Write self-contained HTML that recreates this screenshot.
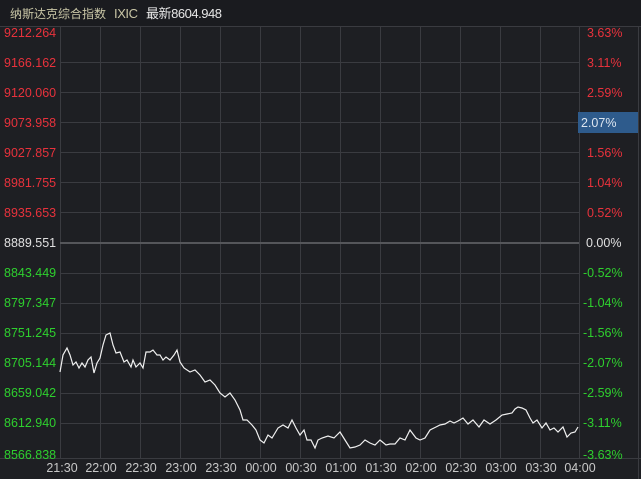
<!DOCTYPE html>
<html><head><meta charset="utf-8"><style>
body{margin:0;width:641px;height:479px;background:#1e1f23;overflow:hidden;font-family:"Liberation Sans","Noto Sans CJK SC",sans-serif;}
</style></head><body>
<svg width="641" height="479" xmlns="http://www.w3.org/2000/svg" style="position:absolute;left:0;top:0">
<rect width="641" height="479" fill="#1e1f23"/>
<rect width="641" height="26" fill="#1a1b1f"/>
<line x1="0" y1="26.5" x2="641" y2="26.5" stroke="#3a3b40"/>
<g font-family="Liberation Sans,Noto Sans CJK SC,sans-serif" font-size="13">
<text x="10" y="18" font-size="12" fill="#c9c6a6" textLength="96">纳斯达克综合指数</text>
<text x="114" y="18" fill="#c9c6a6" textLength="24">IXIC</text>
<text x="146" y="18" fill="#e6e6e6" textLength="76">最新8604.948</text>
</g>
<g stroke="#3a3b40" stroke-width="1">
<line x1="60.5" y1="27" x2="60.5" y2="458"/>
<line x1="100.5" y1="27" x2="100.5" y2="458"/><line x1="140.5" y1="27" x2="140.5" y2="458"/>
<line x1="180.5" y1="27" x2="180.5" y2="458"/><line x1="220.5" y1="27" x2="220.5" y2="458"/>
<line x1="260.5" y1="27" x2="260.5" y2="458"/><line x1="300.5" y1="27" x2="300.5" y2="458"/>
<line x1="340.5" y1="27" x2="340.5" y2="458"/><line x1="380.5" y1="27" x2="380.5" y2="458"/>
<line x1="420.5" y1="27" x2="420.5" y2="458"/><line x1="460.5" y1="27" x2="460.5" y2="458"/>
<line x1="500.5" y1="27" x2="500.5" y2="458"/><line x1="540.5" y1="27" x2="540.5" y2="458"/>
<line x1="579.5" y1="27" x2="579.5" y2="458"/><line x1="638.5" y1="27" x2="638.5" y2="479"/>
<line x1="60" y1="62.5" x2="579" y2="62.5"/><line x1="60" y1="92.5" x2="579" y2="92.5"/>
<line x1="60" y1="122.5" x2="579" y2="122.5"/><line x1="60" y1="152.5" x2="579" y2="152.5"/>
<line x1="60" y1="182.5" x2="579" y2="182.5"/><line x1="60" y1="212.5" x2="579" y2="212.5"/>
<line x1="60" y1="273.5" x2="579" y2="273.5"/><line x1="60" y1="303.5" x2="579" y2="303.5"/>
<line x1="60" y1="333.5" x2="579" y2="333.5"/><line x1="60" y1="363.5" x2="579" y2="363.5"/>
<line x1="60" y1="393.5" x2="579" y2="393.5"/><line x1="60" y1="423.5" x2="579" y2="423.5"/>
<line x1="0" y1="458.5" x2="641" y2="458.5"/>
</g>
<line x1="60" y1="243" x2="579" y2="243" stroke="#55565a" stroke-width="2"/>
<rect x="578" y="112" width="60" height="21" fill="#2e5b8c"/>
<g font-size="12.5" font-family="Liberation Sans,sans-serif">
<g fill="#e8323c">
<text x="4" y="37">9212.264</text><text x="4" y="67">9166.162</text><text x="4" y="97">9120.060</text>
<text x="4" y="127">9073.958</text><text x="4" y="157">9027.857</text><text x="4" y="187">8981.755</text><text x="4" y="217">8935.653</text>
<text x="587" y="37">3.63%</text><text x="587" y="67">3.11%</text><text x="587" y="97">2.59%</text>
<text x="587" y="157">1.56%</text><text x="587" y="187">1.04%</text><text x="587" y="217">0.52%</text>
</g>
<text x="4" y="247" fill="#e0e0e0">8889.551</text><text x="586" y="247" fill="#e0e0e0">0.00%</text>
<text x="581" y="127" fill="#dde6f0">2.07%</text>
<g fill="#2ed02e">
<text x="4" y="277">8843.449</text><text x="4" y="307">8797.347</text><text x="4" y="337">8751.245</text>
<text x="4" y="367">8705.144</text><text x="4" y="397">8659.042</text><text x="4" y="427">8612.940</text><text x="4" y="459">8566.838</text>
<text x="583" y="277">-0.52%</text><text x="583" y="307">-1.04%</text><text x="583" y="337">-1.56%</text>
<text x="583" y="367">-2.07%</text><text x="583" y="397">-2.59%</text><text x="583" y="427">-3.11%</text><text x="583" y="459">-3.63%</text>
</g>
<g fill="#c8c8c8" text-anchor="middle">
<text x="62" y="472">21:30</text><text x="101" y="472">22:00</text><text x="141" y="472">22:30</text>
<text x="181" y="472">23:00</text><text x="221" y="472">23:30</text><text x="261" y="472">00:00</text>
<text x="301" y="472">00:30</text><text x="341" y="472">01:00</text><text x="381" y="472">01:30</text>
<text x="421" y="472">02:00</text><text x="461" y="472">02:30</text><text x="501" y="472">03:00</text>
<text x="541" y="472">03:30</text><text x="580" y="472">04:00</text>
</g>
</g>
<polyline fill="none" stroke="#f0f0f0" stroke-width="1.2" points="60,372 63,355 67,348 70,355 73,365 76,362 79,368 82,363 85,367 88,360 91,357 94,373 97,363 100,358 103,345 106,335 110,333 113,345 116,353 120,352 124,362 127,360 131,367 133,360 136,367 140,363 143,368 146,352 150,352 153,350 157,355 160,355 163,360 166,357 170,360 174,355 177,350 180,362 184,368 190,372 195,370 200,375 205,382 210,380 215,385 220,393 225,397 230,393 235,400 240,410 243,420 247,420 252,425 256,430 260,440 264,443 268,435 272,438 278,428 283,425 288,428 292,420 296,428 300,435 304,430 307,440 311,440 315,448 318,440 322,438 328,436 334,438 340,432 345,440 350,448 355,447 360,445 365,440 370,443 375,445 380,440 386,445 390,444 395,444 400,438 405,440 410,430 416,438 420,440 425,438 430,430 436,427 440,425 445,424 450,421 454,423 458,421 463,418 468,424 473,420 479,427 484,420 490,424 496,420 502,415 507,414 512,413 515,409 518,407 522,408 526,410 530,418 533,423 537,420 542,428 546,423 550,430 554,428 558,432 563,427 567,437 571,433 575,432 578,427"/>
</svg>
</body></html>
